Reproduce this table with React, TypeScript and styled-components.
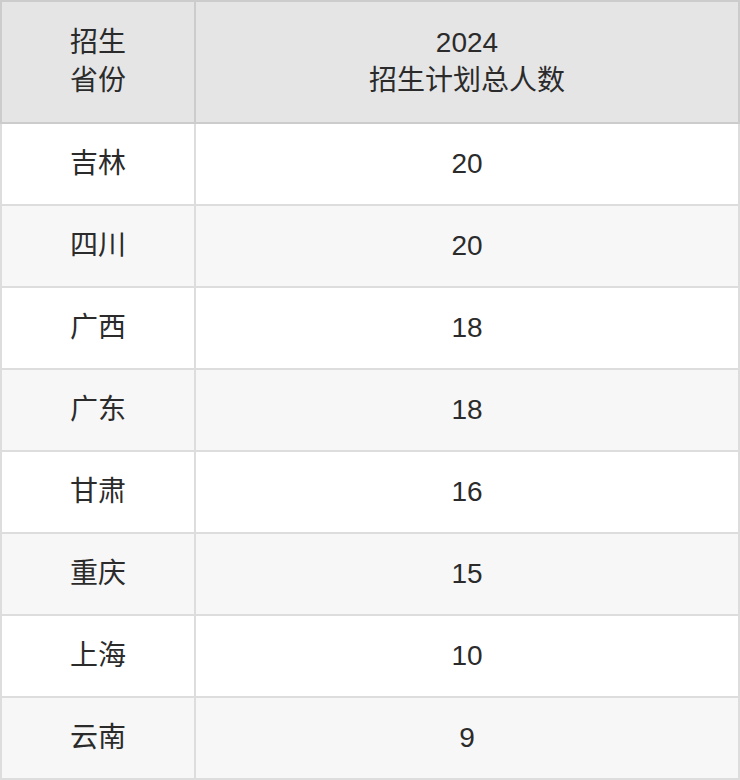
import React from "react";
import styled, { createGlobalStyle } from "styled-components";

const GlobalStyle = createGlobalStyle`
  html, body { margin: 0; padding: 0; background: #ffffff; }
  body { font-family: "Liberation Sans", "Noto Sans CJK SC", sans-serif; }
`;

const Table = styled.table`
  width: 740px;
  border-collapse: separate;
  border-spacing: 0;
  table-layout: fixed;
  font-family: "Liberation Sans", "Noto Sans CJK SC", sans-serif;
  font-size: 28px;
  color: #2b2b2b;
`;

const HeadCell = styled.th<{ $first?: boolean; $w: number }>`
  width: ${(p) => p.$w}px;
  height: 120px;
  padding: 0;
  background: #e5e5e5;
  font-weight: normal;
  line-height: 38px;
  text-align: center;
  vertical-align: middle;
  border-top: 2px solid #cccccc;
  border-bottom: 2px solid #cccccc;
  border-right: 2px solid #cccccc;
  border-left: ${(p) => (p.$first ? "2px solid #cccccc" : "none")};
  box-sizing: content-box;
`;

const Row = styled.tr<{ $alt: boolean }>`
  background: ${(p) => (p.$alt ? "#f7f7f7" : "#ffffff")};
`;

const Cell = styled.td<{ $first?: boolean }>`
  height: 80px;
  padding: 0;
  text-align: center;
  vertical-align: middle;
  line-height: 36px;
  border-bottom: 2px solid #dddddd;
  border-right: 2px solid #dddddd;
  border-left: ${(p) => (p.$first ? "2px solid #dddddd" : "none")};
  box-sizing: content-box;
`;

const rows: [string, string][] = [
  ["吉林", "20"],
  ["四川", "20"],
  ["广西", "18"],
  ["广东", "18"],
  ["甘肃", "16"],
  ["重庆", "15"],
  ["上海", "10"],
  ["云南", "9"],
];

export default function App() {
  return (
    <>
      <GlobalStyle />
      <Table>
        <thead>
          <tr>
            <HeadCell $first $w={192}>
              招生
              <br />
              省份
            </HeadCell>
            <HeadCell $w={542}>
              2024
              <br />
              招生计划总人数
            </HeadCell>
          </tr>
        </thead>
        <tbody>
          {rows.map(([p, n], i) => (
            <Row key={p} $alt={i % 2 === 1}>
              <Cell $first>{p}</Cell>
              <Cell>{n}</Cell>
            </Row>
          ))}
        </tbody>
      </Table>
    </>
  );
}
